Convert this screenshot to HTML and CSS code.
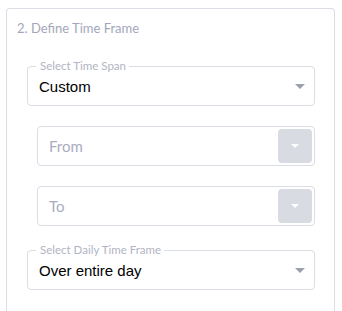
FILE: index.html
```html
<!DOCTYPE html>
<html>
<head>
<meta charset="utf-8">
<link rel="stylesheet" href="styles.css">
</head>
<body>
<div class="card">
  <div class="card-title">2. Define Time Frame</div>
  <div class="fields">
    <div class="select outlined">
      <span class="float-label">Select Time Span</span>
      <span class="value">Custom</span>
      <span class="caret"></span>
    </div>
    <div class="select plain sub first">
      <span class="placeholder">From</span>
      <span class="btn"><span class="caret white"></span></span>
    </div>
    <div class="select plain sub">
      <span class="placeholder">To</span>
      <span class="btn"><span class="caret white"></span></span>
    </div>
    <div class="select outlined daily">
      <span class="float-label">Select Daily Time Frame</span>
      <span class="value">Over entire day</span>
      <span class="caret"></span>
    </div>
  </div>
</div>
</body>
</html>
```
FILE: styles.css
```css
html, body {
  margin: 0;
  padding: 0;
  background: #ffffff;
}
body {
  font-family: "Lato", "Open Sans", sans-serif;
  padding-top: 8px;
}
.card {
  margin: 0 0 0 6px;
  width: 327px;
  height: 302px;
  border: 1px solid #dcdde5;
  border-bottom: none;
  border-radius: 4px 4px 0 0;
  box-sizing: content-box;
  padding: 0;
}
.card-title {
  padding: 11px 0 0 10px;
  font-size: 13px;
  line-height: 16px;
  color: #a3a7bb;
}
.fields {
  display: flex;
  flex-direction: column;
  padding: 0 19px 0 20px;
  margin-top: 30px;
}
.select {
  position: relative;
  height: 40px;
  box-sizing: border-box;
  border: 1px solid #dcdde5;
  border-radius: 4px;
  display: flex;
  align-items: center;
}
.outlined {
  padding: 0 9px 0 11px;
}
.sub {
  margin-left: 10px;
  margin-top: 20px;
  padding: 0 2px 0 11px;
}
.daily {
  margin-top: 24px;
}
.float-label {
  position: absolute;
  top: -8px;
  left: 8px;
  padding: 0 3px 0 4px;
  background: #ffffff;
  font-size: 11.5px;
  line-height: 14px;
  color: #b1b4c4;
}
.value {
  flex: 1;
  font-family: "Liberation Sans", Arial, sans-serif;
  font-size: 15px;
  color: #000000;
  padding-top: 1px;
}
.placeholder {
  flex: 1;
  font-size: 15px;
  color: #a9acbf;
}
.caret {
  width: 0;
  height: 0;
  border-left: 5px solid transparent;
  border-right: 5px solid transparent;
  border-top: 5px solid #9c9fb0;
}
.caret.white {
  border-left-width: 4px;
  border-right-width: 4px;
  border-top: 4px solid #ffffff;
}
.btn {
  width: 34px;
  height: 34px;
  background: #d9dbe2;
  border-radius: 4px;
  display: flex;
  align-items: center;
  justify-content: center;
}
```
